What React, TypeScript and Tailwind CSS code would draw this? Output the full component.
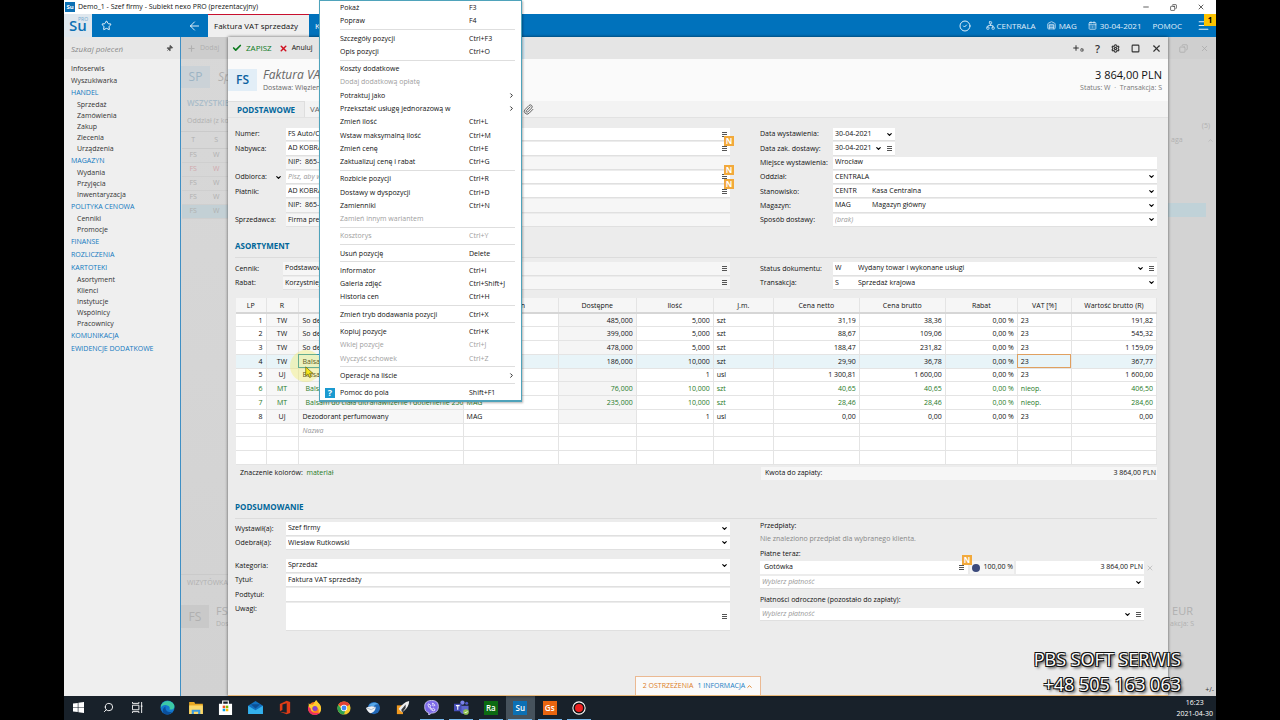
import React from "react";
import {
  Star, ArrowLeft, Pin, Check, X, ChevronDown, ChevronRight, ChevronUp, Menu, Settings, Square,
  Paperclip, Minus, Copy, Plus, CircleCheck, Warehouse, CalendarDays, Network, Search,
} from "lucide-react";

type SideItem = { text: string; kind: "plain" | "head" | "sub" };

const side: SideItem[] = [
  { text: "Infoserwis", kind: "plain" },
  { text: "Wyszukiwarka", kind: "plain" },
  { text: "HANDEL", kind: "head" },
  { text: "Sprzedaż", kind: "sub" },
  { text: "Zamówienia", kind: "sub" },
  { text: "Zakup", kind: "sub" },
  { text: "Zlecenia", kind: "sub" },
  { text: "Urządzenia", kind: "sub" },
  { text: "MAGAZYN", kind: "head" },
  { text: "Wydania", kind: "sub" },
  { text: "Przyjęcia", kind: "sub" },
  { text: "Inwentaryzacja", kind: "sub" },
  { text: "POLITYKA CENOWA", kind: "head" },
  { text: "Cenniki", kind: "sub" },
  { text: "Promocje", kind: "sub" },
  { text: "FINANSE", kind: "head" },
  { text: "ROZLICZENIA", kind: "head" },
  { text: "KARTOTEKI", kind: "head" },
  { text: "Asortyment", kind: "sub" },
  { text: "Klienci", kind: "sub" },
  { text: "Instytucje", kind: "sub" },
  { text: "Wspólnicy", kind: "sub" },
  { text: "Pracownicy", kind: "sub" },
  { text: "KOMUNIKACJA", kind: "head" },
  { text: "EWIDENCJE DODATKOWE", kind: "head" },
];

const sideClass = {
  plain: "h-[12px] pl-[7px] text-[#333]",
  head: "h-[13px] pl-[7px] text-[#0f78c0]",
  sub: "h-[11px] pl-[13px] text-[#333]",
};

type MenuItem = { text: string; keys?: string; off?: boolean; sub?: boolean; help?: boolean };

const menu: MenuItem[][] = [
  [{ text: "Pokaż", keys: "F3" }, { text: "Popraw", keys: "F4" }],
  [{ text: "Szczegóły pozycji", keys: "Ctrl+F3" }, { text: "Opis pozycji", keys: "Ctrl+O" }],
  [
    { text: "Koszty dodatkowe" },
    { text: "Dodaj dodatkową opłatę", off: true },
    { text: "Potraktuj jako", sub: true },
    { text: "Przekształć usługę jednorazową w", sub: true },
    { text: "Zmień ilość", keys: "Ctrl+L" },
    { text: "Wstaw maksymalną ilość", keys: "Ctrl+M" },
    { text: "Zmień cenę", keys: "Ctrl+E" },
    { text: "Zaktualizuj cenę i rabat", keys: "Ctrl+G" },
  ],
  [
    { text: "Rozbicie pozycji", keys: "Ctrl+R" },
    { text: "Dostawy w dyspozycji", keys: "Ctrl+D" },
    { text: "Zamienniki", keys: "Ctrl+N" },
    { text: "Zamień innym wariantem", off: true },
  ],
  [{ text: "Kosztorys", keys: "Ctrl+Y", off: true }],
  [{ text: "Usuń pozycję", keys: "Delete" }],
  [
    { text: "Informator", keys: "Ctrl+I" },
    { text: "Galeria zdjęć", keys: "Ctrl+Shift+J" },
    { text: "Historia cen", keys: "Ctrl+H" },
  ],
  [{ text: "Zmień tryb dodawania pozycji", keys: "Ctrl+X" }],
  [
    { text: "Kopiuj pozycje", keys: "Ctrl+K" },
    { text: "Wklej pozycje", keys: "Ctrl+J", off: true },
    { text: "Wyczyść schowek", keys: "Ctrl+Z", off: true },
  ],
  [{ text: "Operacje na liście", sub: true }],
  [{ text: "Pomoc do pola", keys: "Shift+F1", help: true }],
];

const columns = ["LP", "R", "Nazwa", "Magazyn", "Dostępne", "Ilość", "J.m.", "Cena netto", "Cena brutto", "Rabat", "VAT [%]", "Wartość brutto (R)"];

const colClass = ["w-[30px]", "w-[32px]", "w-[165px]", "w-[95px]", "w-[78px]", "w-[77px]", "w-[60px]", "w-[86px]", "w-[86px]", "w-[72px]", "w-[54px]", "w-[85px]"];

const cellClass = [
  "text-right pr-[3px]", "text-center bg-[#f7f7f7]", "pl-[4px] bg-[#f7f7f7]", "pl-[3px]", "text-right pr-[3px] bg-[#f5f5f5]", "text-right pr-[3px]",
  "pl-[3px]", "text-right pr-[3px]", "text-right pr-[3px]", "text-right pr-[3px]", "pl-[3px]", "text-right pr-[3px]",
];

const rows: string[][] = [
  ["1", "TW", "So delikatny krem", "MAG", "485,000", "5,000", "szt", "31,19", "38,36", "0,00 %", "23", "191,82"],
  ["2", "TW", "So delikatny krem", "MAG", "399,000", "5,000", "szt", "88,67", "109,06", "0,00 %", "23", "545,32"],
  ["3", "TW", "So delikatny krem", "MAG", "478,000", "5,000", "szt", "188,47", "231,82", "0,00 %", "23", "1 159,09"],
  ["4", "TW", "Balsam do ciała", "MAG", "186,000", "10,000", "szt", "29,90", "36,78", "0,00 %", "23", "367,77"],
  ["5", "UJ", "Balsam do ciała", "MAG", "", "1", "usl", "1 300,81", "1 600,00", "0,00 %", "23", "1 600,00"],
  ["6", "MT", "Balsam do ciała", "MAG", "76,000", "10,000", "szt", "40,65", "40,65", "0,00 %", "nieop.", "406,50"],
  ["7", "MT", "Balsam do ciała ultranawilżenie i dotlenienie 250", "MAG", "235,000", "10,000", "szt", "28,46", "28,46", "0,00 %", "nieop.", "284,60"],
  ["8", "UJ", "Dezodorant perfumowany", "MAG", "", "1", "usl", "0,00", "0,00", "0,00 %", "23", "0,00"],
  ["", "", "Nazwa", "", "", "", "", "", "", "", "", ""],
  ["", "", "", "", "", "", "", "", "", "", "", ""],
  ["", "", "", "", "", "", "", "", "", "", "", ""],
];

const Chevron = () => <ChevronDown className="size-[7px] shrink-0 text-black" strokeWidth={4} />;
const Lines = () => (
  <svg viewBox="0 0 7 7" className="size-[7px] shrink-0" stroke="#555"><path d="M1 1.500h5M1 3.500h5M1 5.500h5" /></svg>
);

const NBadge = () => (
  <span className="absolute -top-[6px] -right-[4px] flex size-[10px] items-center justify-center bg-[#f2a93b] text-[8px] leading-none font-bold text-white">N</span>
);

type FieldProps = {
  id: string;
  label: string;
  value?: string;
  code?: string;
  codeClass?: string;
  placeholder?: string;
  kind?: "input" | "select";
  lines?: boolean;
  badge?: boolean;
  soft?: boolean;
  labelClass: string;
  boxClass?: string;
  labelChevron?: boolean;
};

function Field(p: FieldProps) {
  const select = p.kind === "select";
  return (
    <div className="flex min-h-0 items-stretch">
      <div className={`flex shrink-0 items-center ${p.labelClass}`}>
        <label htmlFor={p.id} className="flex-1 whitespace-nowrap">{p.label}</label>
        {p.labelChevron && <span className="pr-[4px]"><Chevron /></span>}
      </div>
      <div className={`relative flex min-w-0 items-center gap-[4px] border-b border-[#e0e0e0] pr-[2px] pl-[2px] ${p.soft ? "bg-[#f6f6f6]" : "bg-white"} ${p.boxClass ?? "flex-1"}`}>
        {p.code && <input aria-label={`${p.label} kod`} defaultValue={p.code} className={`shrink-0 bg-transparent outline-none ${p.codeClass}`} />}
        {select ? (
          <select id={p.id} className={`min-w-0 flex-1 appearance-none bg-transparent outline-none ${p.placeholder ? "text-[#999] italic" : ""}`}>
            <option>{p.value ?? p.placeholder}</option>
          </select>
        ) : (
          <input id={p.id} defaultValue={p.value} placeholder={p.placeholder} className="min-w-0 flex-1 bg-transparent outline-none placeholder:text-[#999] placeholder:italic" />
        )}
        {select && <Chevron />}
        {p.lines && <Lines />}
        {p.badge && <NBadge />}
      </div>
    </div>
  );
}

function SectionTitle({ children }: { children: React.ReactNode }) {
  return <h2 className="border-b border-[#dcdcdc] pb-[4px] text-[8px] leading-[14px] font-bold text-[#006699]">{children}</h2>;
}

function ContextMenu() {
  return (
    <div role="menu" className="absolute top-0 left-[255px] z-20 flex h-[402px] w-[203px] flex-col border border-[#4fa3bb] border-b-2 bg-white pr-[6px] pb-px shadow-[1px_1px_2px_rgba(0,0,0,0.3)]">
      {menu.map((group, g) => (
        <React.Fragment key={g}>
          {g > 0 && <div className="ml-[20px] flex h-1 items-center"><div className="h-px w-full bg-[#dedede]" /></div>}
          {group.map((m) => (
            <button key={m.text} role="menuitem" disabled={m.off} className={`flex min-h-0 flex-1 items-center text-left ${m.off ? "text-[#a0a0a0]" : "text-[#111]"}`}>
              <span className="flex w-[20px] shrink-0 items-center pl-[5px]">
                {m.help && <span className="flex size-[10px] items-center justify-center bg-[#1b9ad0] text-[9px] leading-none font-bold text-white">?</span>}
              </span>
              <span className="w-[129px] shrink-0 whitespace-nowrap">{m.text}</span>
              <span className="flex-1 whitespace-nowrap">{m.keys}</span>
              {m.sub && <ChevronRight className="size-[7px]" strokeWidth={3} />}
            </button>
          ))}
        </React.Fragment>
      ))}
    </div>
  );
}

function TopBars() {
  return (
    <>
      <div className="flex h-[14px] shrink-0 items-center bg-white text-[7px] text-[#111]">
        <span className="ml-px flex size-[10px] items-center justify-center bg-[#0c70b4] text-[6px] leading-none font-bold text-white">Su</span>
        <span className="ml-[3px] flex-1">Demo_1 - Szef firmy - Subiekt nexo PRO (prezentacyjny)</span>
        <button aria-label="Minimalizuj" className="mr-[20px]"><Minus className="size-[8px]" /></button>
        <button aria-label="Przywróć" className="mr-[20px]"><Copy className="size-[7px] -scale-x-100" /></button>
        <button aria-label="Zamknij" className="mr-[11px]"><X className="size-[8px]" /></button>
      </div>
      <div className="relative flex h-[23px] shrink-0 items-stretch bg-[#0072bc] text-white">
        <div className="flex w-[28px] items-center justify-center bg-[#dfe7ee]">
          <div className="relative text-[15px] leading-none font-semibold text-[#0c70b4]">
            Su<span className="absolute -top-px left-[9px] text-[5px] leading-none font-normal text-[#6fa9d0]">PRO</span>
          </div>
        </div>
        <button aria-label="Ulubione" className="flex w-[28px] items-center justify-center"><Star className="size-[11px]" /></button>
        <button aria-label="Wstecz" className="ml-[60px] flex w-[28px] items-center justify-center"><ArrowLeft className="h-[14px] w-[15px]" strokeWidth={1.5} /></button>
        <button className="w-[101px] border-t border-[#c8102e] bg-[#efefef] pr-[5px] text-[8px] whitespace-nowrap text-[#111]">Faktura VAT sprzedaży</button>
        <button className="pl-[6px] text-[8px]">Klienci</button>
        <div className="ml-auto flex items-center gap-[11px] text-[8px] text-[#e0effa]">
          <CircleCheck className="mr-[4px] size-[12px]" strokeWidth={2} />
          <span className="flex items-center gap-[2px]"><Network className="size-[9px]" />CENTRALA</span>
          <span className="flex items-center gap-[3px]"><Warehouse className="size-[9px]" />MAG</span>
          <span className="flex items-center gap-[3px]"><CalendarDays className="size-[9px]" />30-04-2021</span>
          <a href="#pomoc">POMOC</a>
          <button aria-label="Menu" className="mr-[6px] ml-[4px]"><Menu className="h-[13px] w-[13px]" strokeWidth={2} /></button>
        </div>
        <span className="absolute top-0 right-0 flex size-[12px] items-center justify-center bg-[#fdc300] text-[8px] font-bold text-black">1</span>
      </div>
    </>
  );
}

function Sidebar() {
  return (
    <nav className="flex w-[117px] shrink-0 flex-col border-r border-[#3f8fc4] bg-[#efefef] text-[7px] leading-[11px]">
      <div className="flex h-[22px] items-center bg-[#e7e7e7] px-[7px]">
        <input aria-label="Szukaj poleceń" placeholder="Szukaj poleceń" className="min-w-0 flex-1 bg-transparent text-[8px] italic outline-none placeholder:text-[#8a8a8a]" />
        <Pin className="size-[7px] rotate-45 fill-[#555] text-[#555]" />
      </div>
      <ul className="pt-[3px]">
        {side.map((s) => (
          <li key={s.text} className={`flex items-center whitespace-nowrap ${sideClass[s.kind]}`}><a href="#lista">{s.text}</a></li>
        ))}
      </ul>
    </nav>
  );
}

function LeftStrip() {
  return (
    <div className="flex w-[47px] shrink-0 flex-col overflow-hidden bg-gradient-to-b from-[#d8d8d8] to-[#d2d2d2] text-[7px] whitespace-nowrap text-[#b0b0b0]">
      <div className="flex h-[22px] items-center gap-[4px] bg-[#cdcdcd] pl-[6px]"><Plus className="size-[9px] shrink-0" strokeWidth={3} />Dodaj</div>
      <div className="flex h-[35px] items-center">
        <span className="flex h-[22px] w-[29px] shrink-0 items-center justify-center bg-[#cbd2d7] text-[12px] text-[#9db4c4]">SP</span>
        <span className="pl-[8px] text-[12px] italic">Sp</span>
      </div>
      <div className="pl-[6px] text-[8px] leading-[17px] font-semibold text-[#a9bcc9]">WSZYSTKIE</div>
      <div className="border-b border-[#cacaca] pl-[6px] leading-[20px]">Oddział (z kontekstu)</div>
      <table className="ml-px table-fixed">
        <thead><tr className="h-[16px] border-b border-[#cacaca]"><th className="w-[26px] font-normal">T</th><th className="w-[28px] font-normal">S</th></tr></thead>
        <tbody>
          {[0, 1, 2, 3, 4].map((i) => (
            <tr key={i} className={`h-[14px] border-b border-[#cfcfcf] leading-[12px] ${i === 4 ? "bg-[#c3d0d5]" : ""} ${i === 1 ? "text-[#d0a8ac]" : ""}`}>
              <td className="text-center">FS</td><td className="text-center">W</td>
            </tr>
          ))}
        </tbody>
      </table>
      <div className="mt-[355px] border-t border-[#cacaca] pl-[6px] leading-[16px]">WIZYTÓWKA</div>
      <div className="mt-[13px] flex items-center gap-[7px]">
        <span className="flex h-[23px] w-[28px] shrink-0 items-center justify-center bg-[#c9c9c9] text-[12px]">FS</span>
        <div className="leading-[13px]"><div className="text-[11px]">FS</div><div>Dos</div></div>
      </div>
    </div>
  );
}

function RightStrip() {
  return (
    <div className="flex w-[48px] shrink-0 flex-col overflow-hidden bg-[#d3d3d3] text-[7px] whitespace-nowrap text-[#b0b0b0]">
      <div className="flex h-[22px] items-center justify-end gap-[12px] bg-[#cfcfcf] pr-[7px] text-[#a9a9a9]"><Copy className="size-[9px] -scale-x-100" /><X className="size-[9px]" /></div>
      <div className="mt-[57px] pr-[6px] text-right leading-[20px]">(5)</div>
      <div className="flex h-[8px] items-center justify-between pr-[2px] pl-[3px]">aga<ChevronUp className="size-[7px]" /></div>
      <div className="mt-[59px] mr-[10px] flex h-[14px] bg-[#c0d2d8]" />
      <div className="mt-[387px] pr-[23px] text-right text-[11px] leading-[14px]">EUR</div>
      <div className="pl-[2px] leading-[12px]">akcja: S</div>
      <div className="mt-auto pr-[2px] pb-px text-right leading-[10px] text-[#333]">+/-</div>
    </div>
  );
}

function ItemsTable() {
  return (
    <div className="mt-[8px] pl-px">
      <table className="h-[167px] w-full table-fixed border-collapse leading-[11px]">
        <colgroup>{colClass.map((c, i) => <col key={i} className={c} />)}</colgroup>
        <thead>
          <tr className="h-[15px] border-b-2 border-[#d6d6d6] bg-[#f6f6f6]">
            {columns.map((c) => <th key={c} className="border-r border-[#e4e4e4] p-0 text-center font-normal whitespace-nowrap">{c}</th>)}
          </tr>
        </thead>
        <tbody>
          {rows.map((r, i) => {
            const color = i === 5 || i === 6 ? "text-[#1f7a28]" : "";
            return (
              <tr key={i} className={`h-[13px] border-b border-[#e4e4e4] ${i === 3 ? "bg-[#e8f4f8]" : "bg-white"} ${color}`}>
                {r.map((v, c) => {
                  const indent = c === 2 && (i === 5 || i === 6) ? "overflow-hidden bg-[#f7f7f7] pl-[7px]" : "";
                  const base = i === 3 || i > 7 ? cellClass[c].replace("bg-[#f7f7f7]", "").replace("bg-[#f5f5f5]", "") : cellClass[c];
                  const mark = i === 3 && c === 10 ? "outline outline-[#e0a060] -outline-offset-1" : i === 3 && c === 2 ? "outline outline-[#2a93b5] -outline-offset-1" : "";
                  const note = i === 8 ? "text-[#999] italic" : "";
                  return (
                    <td key={c} className={`relative border-r border-[#e4e4e4] py-0 whitespace-nowrap ${indent ? indent : base} ${mark} ${note}`}>
                      {v}
                      {i === 3 && c === 2 && (
                        <span className="absolute -top-[5px] -left-[9px] z-10 flex size-[32px] rounded-full bg-[#f3ec3a]/30 pt-[16px] pl-[15px]">
                          <svg viewBox="0 0 10 14" className="h-[13px] w-[9px]"><path d="M.8.8v10l2.5-2.2 1.8 4 1.8-.8-1.7-3.9h3.5z" fill="#f5e71c" stroke="#6b6410" strokeWidth=".8" /></svg>
                        </span>
                      )}
                    </td>
                  );
                })}
              </tr>
            );
          })}
        </tbody>
      </table>
    </div>
  );
}

function Invoice() {
  const left = "w-[51px]";
  const right = "w-[73px]";
  return (
    <main className="z-10 flex min-w-0 flex-1 flex-col border-b border-[#e9b878] bg-[#ececec] shadow-[0_0_3px_rgba(0,0,0,0.6)]">
      <div className="flex h-[22px] shrink-0 items-center bg-[#e5e5e5] pr-[6px] pl-[4px] text-[7px]">
        <button className="flex items-center gap-[4px] text-[8px] text-[#0b7a1d]"><Check className="size-[10px]" strokeWidth={4} />ZAPISZ</button>
        <button className="ml-[7px] flex items-center gap-[4px]"><X className="size-[9px] text-[#d01020]" strokeWidth={4} />Anuluj</button>
        <button aria-label="Więcej poleceń" className="ml-[152px] w-[60px] self-stretch bg-[#d3e6f0]" />
        <div className="ml-auto flex items-center gap-[11px] text-[#333]">
          <button aria-label="Dodaj skrót" className="flex items-end"><Plus className="size-[8px]" strokeWidth={3} /><Settings className="size-[4px]" strokeWidth={3} /></button>
          <button aria-label="Pomoc" className="text-[11px] leading-none font-semibold">?</button>
          <button aria-label="Ustawienia"><Settings className="size-[9px]" strokeWidth={3} /></button>
          <button aria-label="Maksymalizuj"><Square className="size-[9px]" strokeWidth={3} /></button>
          <button aria-label="Zamknij dokument"><X className="size-[11px]" strokeWidth={2.5} /></button>
        </div>
      </div>
      <header className="flex h-[42px] shrink-0 items-center bg-[#fafafa] pr-[6px]">
        <span className="flex h-[22px] w-[29px] items-center justify-center bg-[#e2eef7] text-[12px] font-semibold text-[#0b62a0]">FS</span>
        <div className="ml-[6px] flex-1 text-[#666]">
          <h1 className="text-[12px] leading-[15px] italic">Faktura VAT</h1>
          <p className="text-[7px] leading-[11px]">Dostawa: Więzienna</p>
        </div>
        <div className="text-right">
          <div className="text-[11px] leading-[15px] text-[#111]">3 864,00 PLN</div>
          <div className="text-[7px] leading-[11px] text-[#777]">Status: W &nbsp;·&nbsp; Transakcja: S</div>
        </div>
      </header>
      <div className="flex h-[17px] shrink-0 items-stretch border-b border-[#e2e2e2] bg-[#f3f3f3] text-[8px]">
        <button className="w-[77px] border-t border-r border-[#dedede] bg-[#ececec] font-bold text-[#00669c]">PODSTAWOWE</button>
        <button className="pl-[5px] text-[#666]">VAT</button>
        <button aria-label="Załączniki" className="ml-[199px] text-[#555]"><Paperclip className="size-[11px]" /></button>
      </div>

      <div className="flex min-h-0 flex-1 flex-col pr-[11px] pl-[7px] text-[7px] text-[#111]">
        <div className="mt-[10px] grid grid-cols-[495fr_397fr] gap-[30px]">
          <div className="grid h-[99px] auto-rows-fr gap-px">
            <Field id="numer" label="Numer:" value="FS Auto/CENTR" lines labelClass={left} />
            <Field id="nabywca" label="Nabywca:" value="AD KOBRA" lines badge labelClass={left} />
            <Field id="nip1" label="" value="NIP:  865-2" soft labelClass={left} />
            <Field id="odbiorca" label="Odbiorca:" placeholder="Pisz, aby wyszukać" lines badge labelChevron labelClass={left} />
            <Field id="platnik" label="Płatnik:" value="AD KOBRA" lines badge labelClass={left} />
            <Field id="nip2" label="" value="NIP:  865-2" soft labelClass={left} />
            <Field id="sprzedawca" label="Sprzedawca:" value="Firma prezentacyjna" soft labelClass={left} />
          </div>
          <div className="grid h-[99px] auto-rows-fr gap-px">
            <Field id="dw" label="Data wystawienia:" value="30-04-2021" kind="select" labelClass={right} boxClass="w-[62px]" />
            <Field id="dz" label="Data zak. dostawy:" value="30-04-2021" kind="select" lines labelClass={right} boxClass="w-[62px]" />
            <Field id="mw" label="Miejsce wystawienia:" value="Wrocław" labelClass={right} />
            <Field id="oddzial" label="Oddział:" value="CENTRALA" kind="select" labelClass={right} />
            <Field id="stan" label="Stanowisko:" code="CENTR" codeClass="w-[33px]" value="Kasa Centralna" kind="select" labelClass={right} />
            <Field id="mag" label="Magazyn:" code="MAG" codeClass="w-[33px]" value="Magazyn główny" kind="select" labelClass={right} />
            <Field id="sd" label="Sposób dostawy:" placeholder="(brak)" kind="select" labelClass={right} />
          </div>
        </div>

        <div className="mt-[12px]"><SectionTitle>ASORTYMENT</SectionTitle></div>
        <div className="mt-[4px] grid grid-cols-[495fr_397fr] gap-[30px]">
          <div className="grid h-[28px] auto-rows-fr gap-px">
            <Field id="cennik" label="Cennik:" value="Podstawowy" lines soft labelClass="w-[48px]" />
            <Field id="rabat" label="Rabat:" value="Korzystniejszy" lines soft labelClass="w-[48px]" />
          </div>
          <div className="grid h-[28px] auto-rows-fr gap-px">
            <Field id="status" label="Status dokumentu:" code="W" codeClass="w-[19px]" value="Wydany towar i wykonane usługi" kind="select" lines labelClass={right} />
            <Field id="trans" label="Transakcja:" code="S" codeClass="w-[19px]" value="Sprzedaż krajowa" kind="select" labelClass={right} />
          </div>
        </div>

        <ItemsTable />

        <div className="mt-[2px] flex h-[13px] shrink-0 items-center pl-[5px]">
          <span>Znaczenie kolorów: &nbsp;<span className="text-[#1f7a28]">materiał</span></span>
          <div className="ml-auto flex w-[396px] items-center justify-between self-stretch bg-[#f6f6f6] pr-px pl-[4px]"><span>Kwota do zapłaty:</span><span>3 864,00 PLN</span></div>
        </div>

        <div className="mt-[20px]"><SectionTitle>PODSUMOWANIE</SectionTitle></div>
        <div className="grid grid-cols-[495fr_397fr] gap-[30px]">
          <div>
            <div className="mt-[3px] grid h-[28px] auto-rows-fr gap-px">
              <Field id="wyst" label="Wystawił(a):" value="Szef firmy" kind="select" labelClass={left} />
              <Field id="odeb" label="Odebrał(a):" value="Wiesław Rutkowski" kind="select" labelClass={left} />
            </div>
            <div className="mt-[9px] grid h-[43px] auto-rows-fr gap-px">
              <Field id="kat" label="Kategoria:" value="Sprzedaż" kind="select" labelClass={left} />
              <Field id="tytul" label="Tytuł:" value="Faktura VAT sprzedaży" labelClass={left} />
              <Field id="podtytul" label="Podtytuł:" labelClass={left} />
            </div>
            <div className="mt-px flex h-[28px]">
              <label htmlFor="uwagi" className="w-[51px] pt-px">Uwagi:</label>
              <div className="flex flex-1 items-center border-b border-[#e0e0e0] bg-white pr-[2px]">
                <textarea id="uwagi" className="h-full min-w-0 flex-1 resize-none bg-transparent outline-none" />
                <Lines />
              </div>
            </div>
          </div>
          <div className="pr-[13px]">
            <p className="leading-[14px]">Przedpłaty:</p>
            <p className="leading-[12px] text-[#888]">Nie znaleziono przedpłat dla wybranego klienta.</p>
            <p className="pt-[2px] leading-[14px]">Płatne teraz:</p>
            <div className="relative flex h-[13px] gap-[2px]">
              <div className="relative flex flex-1 items-center bg-white pr-[3px] pl-[4px]">
                <input aria-label="Forma płatności" defaultValue="Gotówka" className="min-w-0 flex-1 bg-transparent outline-none" />
                <Lines />
                <NBadge />
              </div>
              <div className="flex w-[44px] items-center justify-between bg-[#f6f6f6] pr-px pl-[2px]"><span className="size-[8px] rounded-full bg-[#3b4a7c]" />100,00 %</div>
              <input aria-label="Kwota" defaultValue="3 864,00 PLN" className="w-[128px] bg-white pr-px text-right outline-none" />
              <button aria-label="Usuń płatność" className="absolute top-[3px] -right-[10px] text-[#b0b0b0]"><X className="size-[8px]" /></button>
            </div>
            <div className="mt-[2px] grid h-[13px]">
              <Field id="pl1" label="" placeholder="Wybierz płatność" kind="select" labelClass="w-0" />
            </div>
            <p className="pt-[3px] leading-[16px]">Płatności odroczone (pozostało do zapłaty):</p>
            <div className="grid h-[13px]">
              <Field id="pl2" label="" placeholder="Wybierz płatność" kind="select" lines labelClass="w-0" />
            </div>
          </div>
        </div>

        <button className="mt-auto ml-[400px] flex h-[19px] w-[126px] items-center justify-center gap-[4px] border border-b-0 border-[#ebb992] bg-[#fafafa] text-[7px] whitespace-nowrap">
          <span className="text-[#dc7d1e]">2 OSTRZEŻENIA</span>
          <span className="flex items-center gap-px text-[#1a80c4]">1 INFORMACJA<ChevronUp className="size-[7px] text-[#dc7d1e]" strokeWidth={3} /></span>
        </button>
      </div>
    </main>
  );
}

const Tile = ({ text, cls }: { text: string; cls: string }) => (
  <span className={`flex size-[14px] items-center justify-center text-[8px] leading-none font-semibold text-white ${cls}`}>{text}</span>
);

const taskIcons: { name: string; node: React.ReactNode; open?: boolean; active?: boolean }[] = [
  { name: "Start", node: <svg viewBox="0 0 12 12" className="size-[11px]" fill="#fff"><path d="M0 1.7 5.2 1v4.6H0zM5.9.9 12 0v5.6H5.9zM0 6.3h5.2V11L0 10.3zM5.9 6.3H12V12l-6.1-.9z" /></svg> },
  { name: "Szukaj", node: <Search className="size-[11px] -scale-x-100 text-white" strokeWidth={2} /> },
  { name: "Widok zadań", node: <svg viewBox="0 0 12 12" className="size-[11px]" fill="none" stroke="#fff"><path d="M.5 3.5h7v5h-7zM.5 0v1.500h7V0M.5 12v-1.500h7V12M10.500 0v12M9.500 4.500h2" /></svg> },
  { name: "Edge", node: <svg viewBox="0 0 16 16" className="size-[15px]"><circle cx="8" cy="8" r="7.500" fill="#1479cf" /><path d="M1 6C3 0 12-1 15 5c1.500 4-2 6-5 5 1-2 0-4-3-4.500C4 5 2 6 1 8z" fill="#3cc9a5" /><path d="M6 7c-1 4 3 7 7 5.500-2 3-6 4-9 2-2-3-1-6 2-7.500z" fill="#0a4f9c" /></svg> },
  { name: "Eksplorator", node: <svg viewBox="0 0 16 14" className="h-[12px] w-[14px]"><path d="M0 0h6l1 2h9v12H0z" fill="#e8a822" /><path d="M0 4h16v10H0z" fill="#fbd96b" /><path d="M3 9h10v5h-2.500v-2.500h-5V14H3z" fill="#3c9be0" /></svg> },
  { name: "Sklep", node: <svg viewBox="0 0 16 16" className="size-[15px]"><path d="M5 5V1h6v4" fill="none" stroke="#fff" strokeWidth="1.200" /><path d="M1 4h14v12H1z" fill="#fff" /><path d="M5 6h2.700v2.700H5z" fill="#f25022" /><path d="M8.300 6H11v2.700H8.300z" fill="#7fba00" /><path d="M5 9.300h2.700V12H5z" fill="#00a4ef" /><path d="M8.300 9.300H11V12H8.300z" fill="#ffb900" /></svg> },
  { name: "Poczta", node: <svg viewBox="0 0 16 14" className="h-[13px] w-[15px]"><path d="M0 5 8 0l8 5v9H0z" fill="#1270c0" /><path d="M3 3.500h10L8 8z" fill="#0d4f94" /><path d="m0 5 8 5 8-5v9H0z" fill="#34b1ec" /></svg> },
  { name: "Office", node: <svg viewBox="0 0 14 16" className="h-[15px] w-[12px]"><path d="M1 4 9 0l4 1.500v13L9 16l-8-3 8 1V3L4 4.500V11l-3 1.500z" fill="#e03c16" /></svg> },
  { name: "Firefox", node: <svg viewBox="0 0 16 16" className="size-[15px]"><circle cx="8" cy="9" r="6.800" fill="#ff7a1e" /><path d="M2 3c0 2 2 2 4 2 2-1 2-4 4-5 1 3 5 4 5 9 0 3-1 5-3 6 2-5-1-8-4-8-3 0-3 4 0 5-4 1-7-2-6-9z" fill="#ffcb2e" /><path d="M1.200 7C0 12 4 16 8 16c3 0 5-1 6-3-4 2-10 1-10-4z" fill="#ee2f63" /><circle cx="8.500" cy="9" r="2.700" fill="#8444cf" /></svg> },
  { name: "Chrome", node: <svg viewBox="0 0 16 16" className="size-[14px]"><circle cx="8" cy="8" r="7.500" fill="#f7c92b" /><path d="M1.500 4.250A7.500 7.500 0 0 1 14.500 4.250L8 8z" fill="#e34133" /><path d="M1.500 4.250A7.500 7.500 0 0 0 8 15.500L10 9 5 9z" fill="#2fa351" /><path d="M8 4.200h6.500l-.7-1H5z" fill="#e34133" /><circle cx="8" cy="8" r="3.600" fill="#fff" /><circle cx="8" cy="8" r="2.800" fill="#4285f4" /></svg> },
  { name: "Thunderbird", node: <svg viewBox="0 0 16 16" className="size-[14px]"><circle cx="9" cy="8" r="7" fill="#2269b8" /><path d="M3 5c3-4 9-4 12-1-3-1-5 0-6 2z" fill="#56a7e8" /><path d="M0 8c3-2 7-3 11-1 0 4-3 6-6 7-2-1-4-3-5-6z" fill="#f1f3f6" /><path d="m1 8 5 2 5-3" stroke="#a9b8c8" fill="none" /></svg> },
  { name: "Rakieta", node: <svg viewBox="0 0 16 16" className="size-[14px]"><path d="M1 5h7v10H1z" fill="#f29a1f" /><path d="M15 0C10 1 6 5 3 9l4 4c4-3 8-7 8-13z" fill="#eee" /><path d="M11 4 6 10l1 3 4-5z" fill="#34383d" /></svg> },
  { name: "Viber", open: true, node: <svg viewBox="0 0 16 16" className="size-[15px]"><path d="M8 .500c5 0 7.300 2 7.300 6.500S13 14 8 14l-3 2v-2.500C2 13 .700 11 .700 7S3 .500 8 .500z" fill="#7d6be8" stroke="#dfdafc" strokeWidth=".8" /><path d="M5 4c-2 1 1 6 5 7.500 1 .500 2-1 1.500-1.500L10 8.800l-1 .8C7.500 9 6.700 8 6.500 7l.8-1zM8.500 3.500c2 0 3 1.500 3 3M8.500 5.200c1 0 1.400.6 1.400 1.500" fill="none" stroke="#fff" strokeWidth=".9" /></svg> },
  { name: "Teams", open: true, node: <svg viewBox="0 0 16 16" className="size-[15px]"><circle cx="9" cy="2.800" r="2.300" fill="#7b83eb" /><circle cx="13.500" cy="3.500" r="1.600" fill="#5059c9" /><path d="M6 6h9.500v5c0 3-3 4-5 4s-4-1-4.500-4z" fill="#5e67ce" /><path d="M0 4h8v8H0z" fill="#464eb8" /><path d="M2 6h4M4 6v4.500" stroke="#fff" strokeWidth="1.200" /><circle cx="12.800" cy="12.800" r="3" fill="#92c353" /><path d="m11.400 12.800 1 1 1.800-1.800" stroke="#fff" fill="none" /></svg> },
  { name: "Rachmistrz", open: true, node: <Tile text="Ra" cls="bg-[#0c6b12]" /> },
  { name: "Subiekt", open: true, active: true, node: <Tile text="Su" cls="bg-[#0c70b4]" /> },
  { name: "Gestor", open: true, node: <Tile text="Gs" cls="bg-[#e8650f]" /> },
  { name: "Nagrywanie", open: true, node: <svg viewBox="0 0 16 16" className="size-[14px]"><circle cx="8" cy="8" r="7" fill="#111" stroke="#fff" strokeWidth="1.200" /><circle cx="8" cy="8" r="4.600" fill="#ee2020" /></svg> },
];

function Taskbar() {
  return (
    <footer className="flex h-[24px] shrink-0 items-stretch bg-[#18212a] text-[7px] text-white">
      <div className="flex w-[530px]">
        {taskIcons.map((t) => (
          <button key={t.name} aria-label={t.name} className={`flex flex-1 flex-col items-center ${t.active ? "bg-[#46525c]" : ""}`}>
            <span className="flex flex-1 items-center">{t.node}</span>
            <span className={`h-px w-[24px] ${t.open ? "bg-[#76b9ed]" : ""}`} />
          </button>
        ))}
      </div>
      <div className="ml-auto flex flex-col items-center justify-center pr-[3px] leading-[11px]"><span>16:23</span><span>2021-04-30</span></div>
    </footer>
  );
}

export default function App() {
  return (
    <div className="h-screen overflow-hidden bg-black px-16 font-['Open_Sans','Noto_Sans',sans-serif] text-[#111]">
      <div className="relative flex h-full flex-col">
        <TopBars />
        <div className="flex min-h-0 flex-1">
          <Sidebar />
          <LeftStrip />
          <Invoice />
          <RightStrip />
        </div>
        <Taskbar />
        <div className="text-[7px] leading-[11px]"><ContextMenu /></div>
        <div className="absolute right-[35px] bottom-[23px] z-20 text-right text-[18px] leading-[25px] text-white [text-shadow:-1px_-1px_0_#111,1px_-1px_0_#111,-1px_1px_0_#111,1px_1px_0_#111,2px_2px_3px_#000]">
          <div>PBS SOFT SERWIS</div>
          <div>+48 505 163 063</div>
        </div>
      </div>
    </div>
  );
}
